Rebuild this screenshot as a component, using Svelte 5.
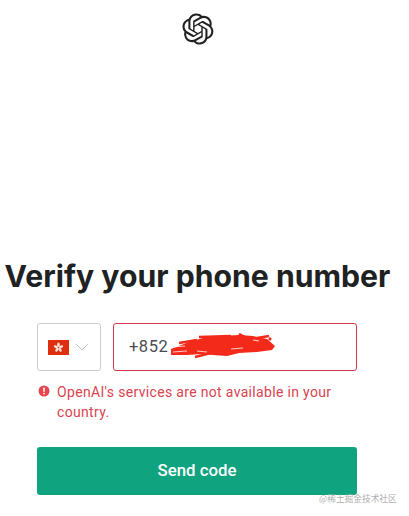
<script lang="ts">
  const phonePrefix = '+852';
  const errorText = "OpenAI's services are not available in your country.";
</script>

<main class="page">
  <header class="logo">
    <svg width="32" height="32" viewBox="0 0 41 41" fill="none" xmlns="http://www.w3.org/2000/svg">
      <path fill="#202123" d="M37.5324 16.8707C37.9808 15.5241 38.1363 14.0974 37.9886 12.6859C37.8409 11.2744 37.3934 9.91076 36.676 8.68622C35.6126 6.83404 33.9882 5.3676 32.0373 4.4985C30.0864 3.62941 27.9098 3.40259 25.8215 3.85078C24.8796 2.7893 23.7219 1.94125 22.4257 1.36341C21.1295 0.785575 19.7249 0.491269 18.3058 0.500197C16.1708 0.495044 14.0893 1.16803 12.3614 2.42214C10.6335 3.67624 9.34853 5.44666 8.6917 7.47815C7.30085 7.76286 5.98686 8.3414 4.8377 9.17505C3.68854 10.0087 2.73073 11.0782 2.02839 12.312C0.956464 14.1591 0.498905 16.2988 0.721698 18.4228C0.944492 20.5467 1.83612 22.5449 3.268 24.1293C2.81966 25.4759 2.66413 26.9026 2.81182 28.3141C2.95951 29.7256 3.40701 31.0892 4.12437 32.3138C5.18791 34.1659 6.8123 35.6322 8.76321 36.5013C10.7141 37.3704 12.8907 37.5973 14.9789 37.1492C15.9208 38.2107 17.0786 39.0587 18.3747 39.6366C19.6709 40.2144 21.0755 40.5087 22.4946 40.4998C24.6307 40.5054 26.7133 39.8321 28.4418 38.5772C30.1704 37.3223 31.4556 35.5506 32.1119 33.5179C33.5027 33.2332 34.8167 32.6547 35.9659 31.821C37.115 30.9874 38.0728 29.9178 38.7752 28.684C39.8458 26.8371 40.3023 24.6979 40.0789 22.5748C39.8556 20.4517 38.9639 18.4544 37.5324 16.8707ZM22.4978 37.8849C20.7443 37.8874 19.0459 37.2733 17.6994 36.1501C17.7601 36.117 17.8666 36.0586 17.936 36.0161L25.9004 31.4156C26.1003 31.3019 26.2663 31.137 26.3813 30.9378C26.4964 30.7386 26.5563 30.5124 26.5549 30.2825V19.0542L29.9213 20.998C29.9389 21.0068 29.9541 21.0198 29.9656 21.0359C29.977 21.052 29.9842 21.0707 29.9867 21.0902V30.3889C29.9842 32.375 29.1946 34.2791 27.7909 35.6841C26.3872 37.0892 24.4838 37.8806 22.4978 37.8849ZM6.39227 31.0064C5.51397 29.4888 5.19742 27.7107 5.49804 25.9832C5.55718 26.0187 5.66048 26.0818 5.73461 26.1244L13.699 30.7248C13.8975 30.8408 14.1233 30.902 14.3532 30.902C14.583 30.902 14.8088 30.8408 15.0073 30.7248L24.731 25.1103V28.9979C24.7321 29.0177 24.7283 29.0376 24.7199 29.0556C24.7115 29.0736 24.6988 29.0893 24.6829 29.1012L16.6317 33.7497C14.9096 34.7416 12.8643 35.0097 10.9447 34.4954C9.02506 33.9811 7.38785 32.7263 6.39227 31.0064ZM4.29707 13.6194C5.17156 12.0998 6.55279 10.9364 8.19885 10.3327C8.19885 10.4013 8.19491 10.5228 8.19491 10.6071V19.808C8.19351 20.0378 8.25334 20.2638 8.36823 20.4629C8.48312 20.6619 8.64893 20.8267 8.84863 20.9404L18.5723 26.5542L15.206 28.4979C15.1894 28.5089 15.1703 28.5155 15.1505 28.5173C15.1307 28.5191 15.1107 28.516 15.0924 28.5082L7.04046 23.8557C5.32135 22.8601 4.06716 21.2235 3.55289 19.3046C3.03862 17.3858 3.30624 15.3413 4.29707 13.6194ZM31.955 20.0556L22.2312 14.4411L25.5976 12.4981C25.6142 12.4872 25.6333 12.4805 25.6531 12.4787C25.6729 12.4769 25.6928 12.4801 25.7111 12.4879L33.7631 17.1364C34.9967 17.849 36.0017 18.8982 36.6606 20.1613C37.3194 21.4244 37.6047 22.849 37.4832 24.2684C37.3617 25.6878 36.8382 27.0432 35.9743 28.1759C35.1103 29.3086 33.9415 30.1717 32.6047 30.6641C32.6047 30.5947 32.6047 30.4733 32.6047 30.3889V21.188C32.6066 20.9586 32.5474 20.7328 32.4332 20.5338C32.319 20.3348 32.154 20.1698 31.955 20.0556ZM35.3055 15.0128C35.2464 14.9765 35.1431 14.9142 35.069 14.8717L27.1045 10.2712C26.906 10.1554 26.6803 10.0943 26.4504 10.0943C26.2206 10.0943 25.9948 10.1554 25.7963 10.2712L16.0726 15.8858V11.9982C16.0715 11.9783 16.0753 11.9585 16.0837 11.9405C16.0921 11.9225 16.1048 11.9068 16.1207 11.8949L24.1719 7.25025C25.4053 6.53903 26.8158 6.19376 28.2383 6.25482C29.6608 6.31589 31.0364 6.78077 32.2044 7.59508C33.3723 8.40939 34.2842 9.53945 34.8334 10.8531C35.3826 12.1667 35.5464 13.6095 35.3055 15.0128ZM14.2424 21.9419L10.8752 19.9981C10.8576 19.9893 10.8423 19.9763 10.8309 19.9602C10.8195 19.9441 10.8122 19.9254 10.8098 19.9058V10.6071C10.8107 9.18295 11.2173 7.78848 11.9819 6.58696C12.7466 5.38544 13.8377 4.42659 15.1275 3.82264C16.4173 3.21869 17.8524 2.99464 19.2649 3.1767C20.6775 3.35876 22.0089 3.93941 23.1034 4.85067C23.0427 4.88379 22.937 4.94215 22.8668 4.98473L14.9024 9.58517C14.7025 9.69878 14.5366 9.86356 14.4215 10.0626C14.3065 10.2616 14.2466 10.4877 14.2479 10.7175L14.2424 21.9419ZM16.071 17.9991L20.4018 15.4978L24.7325 17.9975V22.9985L20.4018 25.4983L16.071 22.9985V17.9991Z"/>
    </svg>
  </header>

  <h1>Verify your phone number</h1>

  <section class="form">
    <div class="phone-row">
      <button class="country" type="button">
        <svg class="flag" width="21" height="15" viewBox="0 0 21 15" xmlns="http://www.w3.org/2000/svg">
          <rect width="21" height="15" fill="#de3010"/>
          <g fill="#f7e4dc">
            <ellipse cx="10.5" cy="4.8" rx="1.3" ry="2.2"/>
            <ellipse cx="10.5" cy="4.8" rx="1.3" ry="2.2" transform="rotate(72 10.5 7.5)"/>
            <ellipse cx="10.5" cy="4.8" rx="1.3" ry="2.2" transform="rotate(144 10.5 7.5)"/>
            <ellipse cx="10.5" cy="4.8" rx="1.3" ry="2.2" transform="rotate(216 10.5 7.5)"/>
            <ellipse cx="10.5" cy="4.8" rx="1.3" ry="2.2" transform="rotate(288 10.5 7.5)"/>
          </g>
        </svg>
        <svg class="chevron" width="14" height="8" viewBox="0 0 14 8" fill="none" xmlns="http://www.w3.org/2000/svg">
          <path d="M1 1l6 6 6-6" stroke="#c2c5c9" stroke-width="1"/>
        </svg>
      </button>

      <div class="phone-input">
        <span class="prefix">{phonePrefix}</span>
        <svg class="scribble" width="108" height="26" viewBox="0 0 108 26" fill="none" xmlns="http://www.w3.org/2000/svg">
          <path d="M2 16L20 9L34 5L52 3L70 2L84 3L98 6L106 13L103 17L88 19L70 20L58 23L44 22L32 21L18 22L2 22Z" fill="#f32a1a"/>
          <path d="M10 10L28 7M30 4L62 3M70 1L76 4M88 5L100 3M102 7L100 5" stroke="#f32a1a" stroke-width="2.5"/>
          <path d="M26 24L46 19" stroke="#f32a1a" stroke-width="2.5"/>
          <path d="M3 14L16 13M4 19L18 18M28 18L38 19M62 16L74 15M84 7L90 8" stroke="#fff" stroke-opacity="0.75" stroke-width="1.2"/>
        </svg>
      </div>
    </div>

    <div class="error">
      <svg class="error-icon" width="12" height="12" viewBox="0 0 12 12" xmlns="http://www.w3.org/2000/svg">
        <circle cx="6" cy="6" r="5.5" fill="#e8454f"/>
        <rect x="5.2" y="2.6" width="1.6" height="4.2" rx="0.6" fill="#fff"/>
        <circle cx="6" cy="8.6" r="0.9" fill="#fff"/>
      </svg>
      <p>{errorText}</p>
    </div>

    <button class="submit" type="button">Send code</button>
  </section>

  <span class="watermark">@稀土掘金技术社区</span>
</main>

<style>
  :global(body) {
    margin: 0;
    background: #fff;
  }

  .page {
    position: relative;
    width: 409px;
    height: 516px;
    overflow: hidden;
    font-family: Roboto, "Liberation Sans", sans-serif;
    color: #202123;
  }

  .logo {
    display: flex;
    justify-content: center;
    width: 395px;
    padding-top: 13px;
    height: 32px;
  }

  h1 {
    width: 395px;
    margin: 212px 0 0;
    font-family: Inter, "Liberation Sans", sans-serif;
    font-size: 30.2px;
    line-height: 38px;
    font-weight: 700;
    text-align: center;
    white-space: nowrap;
    color: #202123;
  }

  .form {
    display: flex;
    flex-direction: column;
    width: 320px;
    margin: 28px 0 0 37px;
  }

  .phone-row {
    display: flex;
    gap: 12px;
    height: 48px;
  }

  .country {
    display: flex;
    align-items: center;
    gap: 6px;
    width: 64px;
    padding: 0 0 0 10px;
    background: #fff;
    border: 1px solid #c9cbd0;
    border-radius: 3px;
  }

  .flag {
    flex: none;
  }

  .chevron {
    flex: none;
  }

  .phone-input {
    position: relative;
    display: flex;
    align-items: center;
    flex: 1;
    padding: 0 0 2px 15px;
    border: 1px solid #d0384a;
    border-radius: 3px;
    font-size: 16.5px;
    letter-spacing: 0.5px;
    color: #4a4c52;
  }

  .scribble {
    position: absolute;
    left: 55px;
    top: 9px;
  }

  .error {
    display: flex;
    gap: 8px;
    margin-top: 11px;
    color: #d9434f;
    font-size: 14px;
    line-height: 20px;
    letter-spacing: 0.33px;
  }

  .error-icon {
    flex: none;
    margin: 3px 0 0 1px;
  }

  .error p {
    margin: 0 0 0 -1px;
  }

  .submit {
    height: 48px;
    margin-top: 25px;
    padding: 0 0 2px;
    border: none;
    border-radius: 3px;
    background: #10a37f;
    color: #fff;
    font-family: inherit;
    font-size: 16.8px;
    font-weight: 500;
  }

  .watermark {
    position: absolute;
    left: 319px;
    top: 492px;
    font-family: "Noto Sans CJK SC", sans-serif;
    font-size: 8.7px;
    line-height: 13px;
    color: #b0b0b0;
    white-space: nowrap;
  }
</style>
